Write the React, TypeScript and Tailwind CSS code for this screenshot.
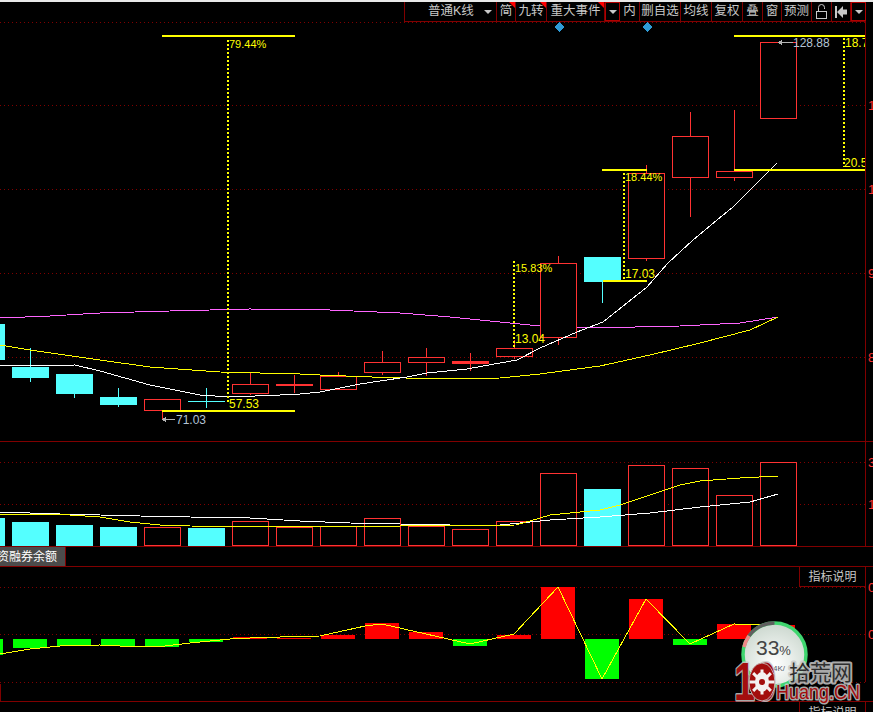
import type { ReactNode } from "react";

const RED = "#ff3232";
const CYAN = "#54ffff";
const YELLOW = "#ffff00";
const GRID = "#800000";
const PINK = "#ff66ff";

// x of candle slot i (slot 0 is cut off at the left edge)
const slotX = (i: number) => 12 + 44 * (i - 1);

type Candle = { up: boolean; top: number; bottom: number; high: number; low: number };

const candles: Candle[] = [
  { up: false, top: 324, bottom: 360, high: 324, low: 360 },
  { up: false, top: 367, bottom: 378, high: 348, low: 382 },
  { up: false, top: 374, bottom: 394, high: 374, low: 398 },
  { up: false, top: 397, bottom: 405, high: 388, low: 407 },
  { up: true, top: 399, bottom: 410, high: 399, low: 420 },
  { up: false, top: 401, bottom: 402, high: 388, low: 408 },
  { up: true, top: 384, bottom: 393, high: 372, low: 395 },
  { up: true, top: 384, bottom: 385, high: 375, low: 393 },
  { up: true, top: 376, bottom: 389, high: 372, low: 389 },
  { up: true, top: 362, bottom: 372, high: 351, low: 375 },
  { up: true, top: 357, bottom: 362, high: 348, low: 376 },
  { up: true, top: 361, bottom: 363, high: 353, low: 371 },
  { up: true, top: 348, bottom: 356, high: 340, low: 359 },
  { up: true, top: 263, bottom: 337, high: 256, low: 345 },
  { up: false, top: 257, bottom: 282, high: 257, low: 303 },
  { up: true, top: 173, bottom: 258, high: 165, low: 261 },
  { up: true, top: 136, bottom: 177, high: 112, low: 217 },
  { up: true, top: 171, bottom: 177, high: 110, low: 181 },
  { up: true, top: 42, bottom: 118, high: 42, low: 118 },
];

const volumes = [518, 522, 525, 527, 527, 528, 521, 527, 526, 518, 526, 529, 521, 473, 489, 465, 468, 495, 462];
const histogram = [655, 648, 646, 646, 647, 642, 637, 638, 635, 623, 632, 646, 635, 587, 679, 599, 645, 624, 625];

const pinkLine = "0,318 50,316 100,313 170,311 250,309 330,310 400,313 450,317 480,320 540,326 590,328 680,326 740,323 778,317";
const yellowLine = "0,345 30,350 100,360 150,367 220,372 300,374 320,375 372,377 405,378 450,379 500,378 540,374 600,366 650,355 700,343 750,330 778,317";
const whiteLine = "0,366 75,365 100,371 150,385 200,395 230,397 280,395 300,394 320,392 360,384 407,377 427,373 467,369 500,363 517,360 540,348 577,332 603,322 647,287 668,263 693,240 717,220 733,207 777,163";
const volWhite = "0,512 60,514 100,515 140,516 190,517 250,518 300,521 350,523 450,525 500,525 520,523 550,520 600,517 650,513 700,507 750,502 778,494";
const volYellow = "0,514 40,514 70,515 100,517 130,522 160,525 190,526 300,527 400,526 516,525 530,521 550,515 600,510 620,505 650,495 680,485 700,481 740,478 778,476";
const macdLine = "0,654 30,649 60,646 100,645 140,647 165,646 190,643 230,639 250,638 280,637 320,636 365,626 382,624 426,634 470,644 514,634 558,587 602,679 646,599 690,644 734,624 778,625";

const Pane = ({ top, height, className, children }: { top: number; height: number; className: string; children: ReactNode }) => (
  <svg viewBox={`0 ${top} 873 ${height}`} className={`block w-[873px] ${className}`} shapeRendering="crispEdges" fontFamily="'Liberation Sans', Arial, sans-serif">
    {children}
  </svg>
);

const HDots = ({ y }: { y: number }) => <line x1={0} x2={865} y1={y + 0.5} y2={y + 0.5} stroke={GRID} strokeDasharray="1 3" />;

const AxisNum = ({ y, children }: { y: number; children: ReactNode }) => (
  <text x={868} y={y + 5} fill={RED} fontSize={13}>
    {children}
  </text>
);

const Step = ({ points, color, width = 1 }: { points: string; color: string; width?: number }) => (
  <polyline points={points} fill="none" stroke={color} strokeWidth={width} />
);

const YellowBar = ({ x1, x2, y }: { x1: number; x2: number; y: number }) => <rect x={x1} y={y} width={x2 - x1} height={2} fill={YELLOW} />;

const YellowDots = ({ x, y1, y2 }: { x: number; y1: number; y2: number }) => (
  <line x1={x} x2={x} y1={y1} y2={y2} stroke={YELLOW} strokeWidth={2} strokeDasharray="2 2" />
);

const Label = ({ x, y, size = 11, children }: { x: number; y: number; size?: number; children: ReactNode }) => (
  <text x={x} y={y} fill={YELLOW} fontSize={size}>
    {children}
  </text>
);

const Price = ({ x, y, children }: { x: number; y: number; children: ReactNode }) => (
  <text x={x} y={y} fill="#b4c4d4" fontSize={12}>
    {children}
  </text>
);

const Arrow = ({ x1, x2, y }: { x1: number; x2: number; y: number }) => (
  <g>
    <line x1={x1 + 3} x2={x2} y1={y + 0.5} y2={y + 0.5} stroke="#b4b4b4" />
    <path d={`M${x1} ${y + 0.5}l4 -3v6z`} fill="#b4b4b4" />
  </g>
);

const Cell = ({ w, flag, strong, className, children }: { w: string; flag?: boolean; strong?: boolean; className?: string; children: ReactNode }) => (
  <div className={`relative flex h-full items-center justify-center border-r ${strong ? "border-[#b00000]" : "border-[#800000]"} ${w} ${className ?? ""}`}>
    {children}
    {flag && <span className="absolute right-0 top-0 h-0 w-0 border-l-[6px] border-t-[6px] border-l-transparent border-t-[#ff0000]" />}
  </div>
);

const Caret = () => <span className="h-0 w-0 border-x-[4px] border-t-[4px] border-x-transparent border-t-[#c8c8c8]" />;

const Toolbar = () => (
  <div className="flex h-5 justify-end pr-[7px] text-[12.5px] text-[#c8c8c8]">
    <div className="flex border-l border-b border-[#800000]">
      <Cell w="w-[92px]" className="!justify-between pl-[23px] pr-[4px]">
        <span>普通K线</span>
        <Caret />
      </Cell>
      <Cell w="w-[19px]" flag>简</Cell>
      <Cell w="w-[31px]" flag>九转</Cell>
      <Cell w="w-[58px]" flag>重大事件</Cell>
      <Cell w="w-[15px]" strong className="border-y border-l border-[#b00000]"><Caret /></Cell>
      <Cell w="w-[20px]">内</Cell>
      <Cell w="w-[41px]">删自选</Cell>
      <Cell w="w-[31px]">均线</Cell>
      <Cell w="w-[31px]">复权</Cell>
      <Cell w="w-[20px]">叠</Cell>
      <Cell w="w-[19px]">窗</Cell>
      <Cell w="w-[30px]">预测</Cell>
      <Cell w="w-[20px]">
        <svg width="14" height="16" viewBox="0 0 14 16" fill="none" stroke="#c8c8c8" strokeWidth="1">
          <rect x="1.5" y="7.5" width="10" height="7" />
          <path d="M3.5 7.5V3.5a3 3 0 0 1 6 0V5" />
        </svg>
      </Cell>
      <Cell w="w-[19px]">
        <svg width="14" height="12" viewBox="0 0 14 12" fill="#c8c8c8">
          <rect x="1" y="0" width="2" height="12" />
          <path d="M3 6l6-6v3.5h4v5H9V12z" />
        </svg>
      </Cell>
      <Cell w="w-[15px]" strong className="border-y border-l border-[#b00000]"><Caret /></Cell>
    </div>
  </div>
);

const MainChart = () => (
  <Pane top={22} height={419} className="h-[419px]">
    <HDots y={22} />
    <HDots y={105} />
    <HDots y={189} />
    <HDots y={273} />
    <HDots y={357} />
    <line x1={865.5} x2={865.5} y1={22} y2={441} stroke={GRID} />
    <path d="M559 22l5 5-5 5-5-5z M647 22l5 5-5 5-5-5z" fill="#2e9bd6" />

    <polyline points={pinkLine} fill="none" stroke={PINK} />
    {candles.map((c, i) => {
      const x = slotX(i);
      const mid = x + 18.5;
      const color = c.up ? RED : CYAN;
      return (
        <g key={i}>
          <line x1={mid} x2={mid} y1={c.high} y2={c.low} stroke={color} />
          {c.up ? (
            <rect x={x + 0.5} y={c.top + 0.5} width={36} height={c.bottom - c.top} fill="#000" stroke={RED} />
          ) : (
            <rect x={x} y={c.top} width={37} height={c.bottom - c.top} fill={CYAN} />
          )}
        </g>
      );
    })}
    <line x1={276} x2={313} y1={384.5} y2={384.5} stroke={RED} />
    <rect x={452} y={361} width={37} height={2} fill={RED} />
    <line x1={470.5} x2={470.5} y1={353} y2={371} stroke={RED} />
    <Step points={yellowLine} color={YELLOW} />
    <Step points={whiteLine} color="#ffffff" />

    <YellowBar x1={162} x2={295} y={35} />
    <YellowBar x1={162} x2={295} y={410} />
    <YellowDots x={228} y1={40} y2={402} />
    <Label x={229} y={48}>79.44%</Label>
    <Label x={229} y={408} size={12}>57.53</Label>
    <Arrow x1={162} x2={175} y={419} />
    <Price x={176} y={424}>71.03</Price>

    <YellowDots x={514} y1={261} y2={347} />
    <Label x={515} y={272}>15.83%</Label>
    <Label x={515} y={343} size={12}>13.04</Label>

    <YellowBar x1={602} x2={647} y={169} />
    <YellowBar x1={603} x2={647} y={280} />
    <YellowDots x={624} y1={173} y2={280} />
    <Label x={625} y={181}>18.44%</Label>
    <Label x={625} y={278} size={12}>17.03</Label>

    <YellowBar x1={734} x2={865} y={35} />
    <YellowBar x1={734} x2={865} y={169} />
    <YellowDots x={844} y1={38} y2={167} />
    <Arrow x1={778} x2={793} y={42} />
    <Price x={793} y={47}>128.88</Price>
    <svg x={0} y={22} width={865} height={419} viewBox="0 22 865 419">
      <Label x={845} y={47} size={12}>18.7</Label>
      <Label x={844} y={167} size={12}>20.5</Label>
    </svg>

    <AxisNum y={105}>1</AxisNum>
    <AxisNum y={189}>1</AxisNum>
    <AxisNum y={273}>9</AxisNum>
    <AxisNum y={357}>8</AxisNum>
  </Pane>
);

const VolumeChart = () => (
  <Pane top={441} height={105} className="h-[105px]">
    <line x1={0} x2={873} y1={441.5} y2={441.5} stroke={GRID} />
    <HDots y={462} />
    <HDots y={504} />
    <line x1={865.5} x2={865.5} y1={441} y2={546} stroke={GRID} />
    {volumes.map((top, i) => {
      const x = slotX(i);
      return candles[i].up ? (
        <rect key={i} x={x + 0.5} y={top + 0.5} width={36} height={545 - top} fill="#000" stroke={RED} />
      ) : (
        <rect key={i} x={x} y={top} width={37} height={546 - top} fill={CYAN} />
      );
    })}
    <Step points={volWhite} color="#ffffff" />
    <Step points={volYellow} color={YELLOW} />
    <AxisNum y={462}>3</AxisNum>
    <AxisNum y={504}>1</AxisNum>
  </Pane>
);

const TabRow = () => (
  <div className="flex h-[21px] border-y border-[#800000]">
    <div className="flex w-[66px] justify-end overflow-hidden whitespace-nowrap border-r border-[#800000] bg-[#4b4b4b] pr-2 pt-px text-xs leading-[18px] text-white">
      融资融券余额
    </div>
  </div>
);

const LowerChart = () => (
  <div className="relative h-[134px]">
    <Pane top={567} height={134} className="h-[134px]">
      <HDots y={587} />
      <HDots y={634} />
      <HDots y={682} />
      <line x1={865.5} x2={865.5} y1={567} y2={682} stroke={GRID} />
      <line x1={0.5} x2={0.5} y1={684} y2={701} stroke={GRID} />
      {histogram.map((v, i) => {
        const x = i === 0 ? 0 : slotX(i) + 1;
        const w = i === 0 ? 3 : 34;
        return v > 639 ? (
          <rect key={i} x={x} y={639} width={w} height={v - 639} fill="#00ff00" />
        ) : (
          <rect key={i} x={x} y={v} width={w} height={639 - v} fill="#ff0000" />
        );
      })}
      <Step points={macdLine} color={YELLOW} />
      <AxisNum y={587}>0</AxisNum>
      <AxisNum y={634}>0</AxisNum>
    </Pane>
    <div className="absolute left-[799px] top-0 flex h-5 w-[67px] items-center justify-center border-x border-b border-[#800000] text-xs text-[#c8c8c8]">
      指标说明
    </div>
  </div>
);

const Footer = () => (
  <div className="flex h-[11px] justify-end overflow-hidden border-t border-[#800000] pr-[7px]">
    <div className="flex h-5 w-[67px] justify-center border-x border-[#800000] pt-[3px] text-xs text-[#c8c8c8]">指标说明</div>
  </div>
);

// floating speed badge from the screen capture tool
const SpeedBadge = () => (
  <div className="absolute left-[741px] top-[621px] h-[67px] w-[67px]">
    <svg viewBox="0 0 67 67" className="absolute inset-0 h-full w-full">
      <defs>
        <radialGradient id="inner" cx="50%" cy="65%" r="65%">
          <stop offset="0%" stopColor="#ffffff" />
          <stop offset="100%" stopColor="#ccd8cf" />
        </radialGradient>
      </defs>
      <circle cx="33.5" cy="33.5" r="31" fill="url(#inner)" />
      <circle cx="33.5" cy="33.5" r="31.5" fill="none" stroke="#3fd66f" strokeWidth="3.5" />
      <path d="M33.5 2A31.5 31.5 0 0 0 8 15" fill="none" stroke="#5f5f5f" strokeWidth="3.5" />
      <path d="M8 15A31.5 31.5 0 0 0 3 26" fill="none" stroke="#e88" strokeWidth="3.5" />
    </svg>
    <div className="absolute left-[15px] top-[15px] font-['Liberation_Sans'] text-[21px] leading-[24px] text-[#444]">
      33<span className="text-[13px]">%</span>
    </div>
    <div className="absolute left-[32px] top-[43px] font-['Liberation_Sans'] text-[8px] leading-[10px] text-[#556]">4K/</div>
  </div>
);

const Watermark = () => (
  <svg viewBox="0 0 143 57" className="absolute left-[730px] top-[655px] h-[57px] w-[143px]">
    <g fontFamily="'Liberation Sans', Arial, sans-serif" style={{ paintOrder: "stroke" }} stroke="#c9c9c9" strokeOpacity={0.85} strokeLinejoin="round">
      <text x={4} y={45} fontSize={53} fontWeight={700} fill="#a30d0d" strokeWidth={3} textLength={42} lengthAdjust="spacingAndGlyphs">
        10
      </text>
      <text x={46} y={44} fontSize={21} fill="#a30d0d" strokeWidth={3} textLength={84} lengthAdjust="spacingAndGlyphs">
        Huang.CN
      </text>
      <text x={59} y={25} fontSize={21} fontFamily="'Noto Sans CJK SC', sans-serif" fill="#2e2e2e" strokeWidth={4}>
        拾荒网
      </text>
    </g>
    <g transform="translate(32 27)">
      <ellipse rx={13} ry={19} fill="#a30d0d" stroke="#c9c9c9" strokeOpacity={0.85} />
      <ellipse rx={7} ry={10} fill="#f4f0f0" />
      {[0, 45, 90, 135].map((a) => (
        <rect key={a} x={-1.5} y={-12.5} width={3} height={25} fill="#f4f0f0" transform={`rotate(${a})`} />
      ))}
      <circle r={3} fill="#a30d0d" />
    </g>
  </svg>
);

export default function App() {
  return (
    <div className="relative h-[712px] w-[873px] overflow-hidden bg-black font-['Liberation_Sans','Noto_Sans_CJK_SC',sans-serif]">
      <div className="h-0.5 bg-[#e8e8e8]" />
      <Toolbar />
      <MainChart />
      <VolumeChart />
      <TabRow />
      <LowerChart />
      <Footer />
      <SpeedBadge />
      <Watermark />
    </div>
  );
}
